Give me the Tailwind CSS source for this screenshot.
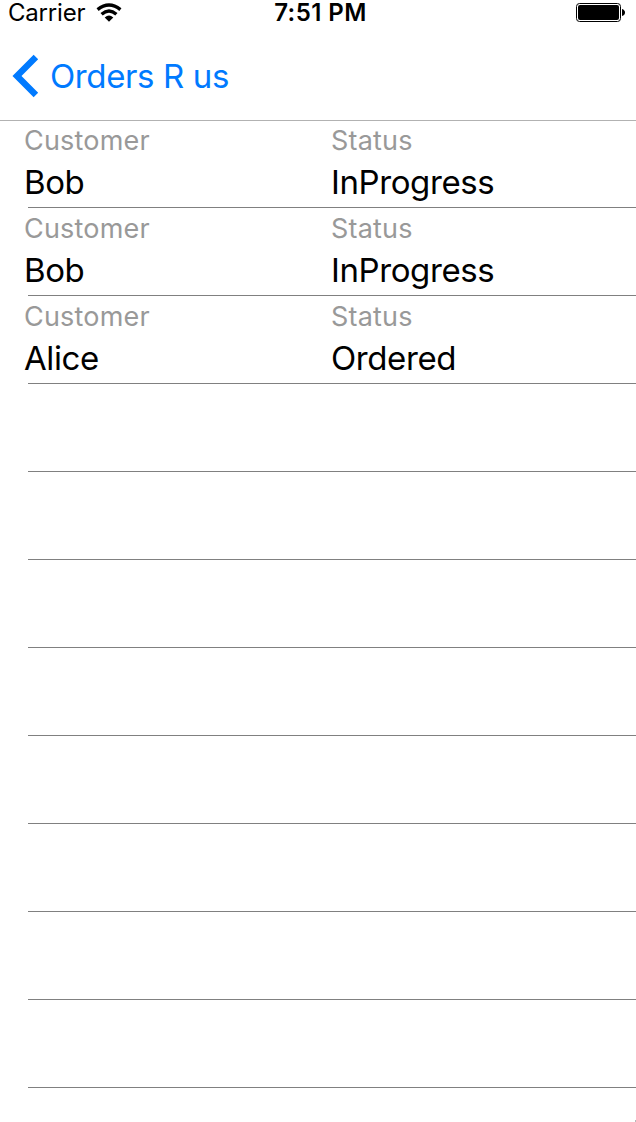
<!DOCTYPE html>
<html lang="en"><head><meta charset="utf-8"><title>Orders</title>
<script src="https://cdn.jsdelivr.net/npm/@tailwindcss/browser@4"></script></head>
<body class="w-[636px] h-[1122px] overflow-hidden bg-white font-['Inter',sans-serif] text-black">
<div class="relative flex flex-col h-[1122px]">
<header class="h-[121px] shrink-0 border-b border-[#b2b2b2]">
<div class="grid grid-cols-3 h-[26px] items-center pl-2 pr-[11px] text-[24px] leading-[26px]">
<div class="flex items-center gap-[10.5px]"><span class="tracking-[-0.2px]">Carrier</span>
<svg class="w-[26px] h-[20px]" viewBox="0 0 26 20"><g fill="none" stroke="#000" stroke-width="3.4"><path d="M1.600 6.600Q13 -2.600 24.400 6.600"/><path d="M5.600 11.200Q13 4.800 20.400 11.200"/></g><path d="M8.700 14.600Q13 10.600 17.300 14.600L13 18.800Z"/></svg></div>
<div class="pl-[8px] text-center font-semibold tracking-[0.45px]">7:51 PM</div>
<div class="flex justify-end"><svg class="w-[49px] h-[20px]" viewBox="0 0 49 20"><rect x=".5" y=".5" width="44" height="18" rx="3" fill="none" stroke="#000"/><rect x="2" y="2" width="41" height="15" rx="2"/><path d="M46 6q3 1 3 3.500t-3 3.500z"/></svg></div>
</div>
<div class="flex items-center h-[94px] pl-[12px] pt-[6px] text-[#007aff]">
<svg class="w-[27px] h-[44px]" viewBox="0 0 27 44"><path d="M23.900 3L5 22L23.900 41" fill="none" stroke="#007aff" stroke-width="6.400"/></svg>
<span class="ml-[11px] pt-[2px] text-[33px] tracking-[-0.38px]">Orders R us</span></div>
</header>
<main id="rows" class="pl-[28px]"></main>
<div class="absolute right-0 bottom-0 w-px h-[2px] bg-[#b8b8b8]"></div>
</div>
<script>
const orders = [['Bob','InProgress'],['Bob','InProgress'],['Alice','Ordered']];
const cell = (label, value) => `<div><div class="mb-px text-[27px] leading-[38px] tracking-[0.2px] text-[#999999]">${label}</div><div class="text-[33px] leading-[42px] tracking-[-0.4px]">${value}</div></div>`;
document.getElementById('rows').innerHTML = Array.from({length: 11}, (_, i) => {
  const order = orders[i];
  const content = order ? `<div class="grid grid-cols-[307px_1fr] -ml-[4px] pb-[4px]">${cell('Customer', order[0])}${cell('Status', order[1])}</div>` : '';
  return `<div class="flex flex-col justify-end h-[88px] first:h-[87px] border-b border-[#808080]">${content}</div>`;
}).join('');
</script>
</body></html>
